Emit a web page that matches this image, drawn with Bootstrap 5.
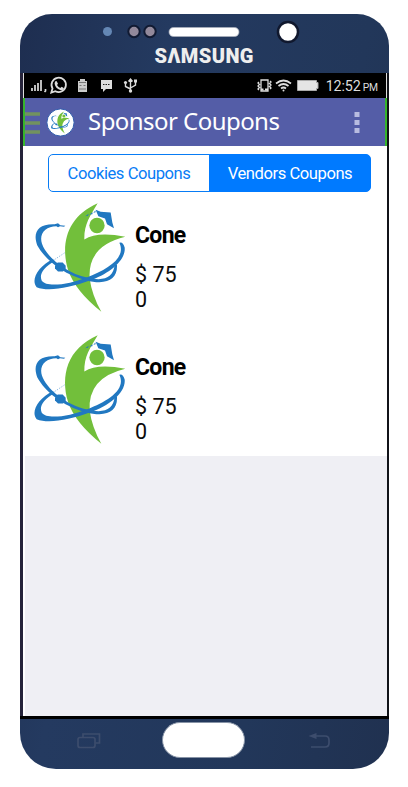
<!DOCTYPE html>
<html lang="en">
<head>
<meta charset="utf-8">
<meta name="viewport" content="width=device-width, initial-scale=1">
<title>Sponsor Coupons</title>
<link href="https://cdn.jsdelivr.net/npm/bootstrap@5.3.0/dist/css/bootstrap.min.css" rel="stylesheet">
<style>
body{background:#fff;overflow:hidden;font-family:Roboto,sans-serif;color:#0b0b0b}
.phone{width:369px;height:755px;margin:14px 0 0 20px;border-radius:32px 32px 36px 36px;background:linear-gradient(100deg,#1e2e50,#243a60 30%,#22375a 70%,#203150);overflow:hidden}
.bezel-top{height:59px}
.screen{width:369px;height:643px;border-left:3px solid #25233a;border-right:2px solid #111319}
.statusbar{height:25px;background:#000;border-left:1px solid #ddd;border-right:1px solid #ddd}
.appbar{height:48px;background:#545da7;border-left:2px solid #35b52c;border-right:2px solid #35b52c}
.app-title{font:24px/44px "Noto Sans","Open Sans",sans-serif;color:#fff;letter-spacing:-.55px;margin-left:13px;padding-bottom:3px;white-space:nowrap}
.clock{font-size:14.3px;line-height:27px;color:#ddd;letter-spacing:-.1px;white-space:nowrap}
.clock small{font-size:10.3px;margin-left:-1.5px}
.tabs{width:323px;height:38px;margin:8px 0 0 25px}
.tabs .btn{--bs-btn-color:#087cf5;--bs-btn-border-color:#087cf5;--bs-btn-active-bg:#007aff;--bs-btn-active-border-color:#007aff;--bs-btn-border-radius:5px;font-size:16.6px;line-height:37px;letter-spacing:-.45px;padding:0;white-space:nowrap}
.coupon{height:132px;padding:10px 0 0 11px}
.coupon h2{font-size:23px;line-height:26px;font-weight:700;letter-spacing:-.7px;margin:21px 0 13px;color:#000}
.price{font-size:21.5px;line-height:25px;width:46px}
.filler{background:#efeff4;margin-left:2px;height:260px}
.bezel-bottom{height:53px;border-top:3px solid #000}
svg{display:block;flex:none}
</style>
<script src="https://cdn.jsdelivr.net/npm/bootstrap@5.3.0/dist/js/bootstrap.bundle.min.js"></script>
</head>
<body>
<svg width="0" height="0" class="position-absolute">
<symbol id="logo" viewBox="42 21 279 330">
<path fill="#72bf3b" d="M233 23C210 62 192 86 193 132Q232 107 316 124Q202 151 209 250Q216 300 244 349Q165 286 144 223C121 145 141 63 233 23Z"/>
<circle cx="231" cy="90" r="23" fill="#72bf3b"/>
<g fill="#2178c1">
<path d="M227 43L242 49 272 51 277 81 282 98 261 86 255 69 235 62Z"/>
<path d="M196 62L206 55 204 61ZM208 57L218 50 217 56ZM220 51L227 45 226 51Z"/>
<path d="M136 91L132 94 120 92 114 95 109 92C77 92 56 114 66 145C78 182 137 233 201 246C253 259 280 246 284 208Q287 202 291 209C293 254 258 270 197 254C127 236 74 190 52 150C38 113 51 84 104 86L114 83 121 89Z"/>
<path d="M99 191L104 197C70 215 57 236 65 255C79 277 147 267 202 245C262 222 320 187 298 142Q308 137 314 156C318 194 269 235 207 256C149 277 84 289 50 275C31 252 55 211 99 191Z"/>
<path d="M113 201H128L137 211V219L129 228H114L105 219V211Z"/>
</g>
<path d="M104 192L137 170" stroke="#2178c1" stroke-width="1.5" stroke-dasharray="4 4"/>
</symbol>
</svg>
<main class="phone d-flex flex-column">
<header class="bezel-top">
<svg width="368" height="59" viewBox="20 14 368 59">
<circle cx="107.500" cy="31.500" r="4.500" fill="#6487b4"/>
<g fill="#92899b" stroke="#111a32" stroke-width="2"><circle cx="134" cy="31.500" r="5.700"/><circle cx="150" cy="31.500" r="5.700"/></g>
<rect x="169" y="27.500" width="70" height="9" rx="4.500" fill="#fff" stroke="#aab0bb" stroke-width=".7"/>
<circle cx="288" cy="32" r="10" fill="#fff" stroke="#10182e" stroke-width="2.500"/>
<text x="154.500" y="63" textLength="99" lengthAdjust="spacing" font-family="Roboto" font-weight="900" font-size="20" fill="#eee">S<tspan>Λ</tspan>MSUNG</text>
</svg>
</header>
<section class="screen">
<div class="statusbar d-flex">
<svg width="120" height="25" viewBox="24 73 120 25" fill="none" stroke="#ddd">
<path stroke-width="1.700" d="M32 91v-3M35 91v-6M38 91v-8M41 91v-11M45.500 89v2l-1 1"/>
<path stroke-width="1.800" d="M51.300 92.500l1.200-4a7.200 7.200 0 1 1 2.800 2.700Z"/>
<path fill="#ddd" stroke="none" d="M55 81.500l1.500-.6 1.500 2.800-1 1.400q1 2 3.200 3l1.500-1.300 2.300 1.500q-.6 2.300-3 2-5.500-1.500-6.400-6.500Z"/>
<path fill="#ccc" stroke="none" d="M80 79h5v2h2v11h-9V81h2Z"/>
<path stroke="#777" stroke-width="1" d="M79 82.500h7M79.500 85.500h2M83.500 85.500h2M79 89h7"/>
<path fill="#ddd" stroke="none" d="M101 80h11v9h-6l-3 3v-3h-2Z"/>
<path stroke="#222" stroke-dasharray="1.500 1" d="M103 84.500h7"/>
<path stroke-width="1.400" d="M130.500 91V79M128.500 81.500l2-2.500 2 2.500M125.500 83.500v3l5 2.500M135.500 82v3l-5 3"/>
<g fill="#ddd" stroke="none"><circle cx="125.500" cy="82.500" r="1.600"/><path d="M134 79.500h3v3h-3z"/><circle cx="130.500" cy="91" r="1.700"/></g>
</svg>
<svg class="ms-auto" width="66" height="25" viewBox="255 73 66 25" fill="none" stroke="#ddd">
<path stroke-width="1.300" d="M260 80h7v11h-7ZM258 82l-1 1 1.500 1.500-1.500 1.500 1.500 1.500L257 89l1 1M269 81l1 1-1.500 1.500 1.500 1.500-1.500 1.500 1.500 1.500-1 1"/>
<path stroke-width="2" d="M260 89.500h2.500M264 89.500h3"/>
<path stroke-width="1.700" d="M275 83.500q7.500-6 15 0M277.500 86q5-4 10 0M280 88.500q2.500-2 5 0"/>
<circle cx="282.500" cy="90.500" r="1" fill="#ddd" stroke="none"/>
<path stroke="#aaa" fill="#e5e5e5" d="M296.500 80.500h19v2h1.500v6h-1.500v2h-19Z"/>
</svg>
<div class="clock ms-1 me-2">12:52 <small>PM</small></div>
</div>
<nav class="appbar d-flex align-items-center">
<svg width="50" height="48" viewBox="25 98 50 48">
<path d="M25 114h15M25 123h15M25 132h15" stroke="#72925f" stroke-width="3.500"/>
<circle cx="60.500" cy="122.500" r="13.600" fill="#fff" stroke="#345fae" stroke-width="1"/>
<use href="#logo" x="51" y="111" width="19" height="23"/>
</svg>
<div class="app-title">Sponsor Coupons</div>
<svg class="ms-auto me-4" width="10" height="24" fill="#b8bce0"><path d="M3.500 2h5v5h-5zM3.500 10h5v5h-5zM3.500 18h5v5h-5z"/></svg>
</nav>
<div class="bg-white overflow-hidden" style="height:570px">
<div class="tabs btn-group d-flex" role="group">
<button type="button" class="btn btn-outline-primary w-50">Cookies Coupons</button>
<button type="button" class="btn btn-outline-primary active w-50">Vendors Coupons</button>
</div>
<article class="coupon d-flex"><svg width="93" height="111"><use href="#logo"/></svg><div class="ms-2"><h2>Cone</h2><div class="price">$ 75<br>0</div></div></article>
<article class="coupon d-flex"><svg width="93" height="111"><use href="#logo"/></svg><div class="ms-2"><h2>Cone</h2><div class="price">$ 75<br>0</div></div></article>
<div class="filler"></div>
</div>
</section>
<footer class="bezel-bottom">
<svg width="368" height="50" viewBox="20 720 368 50" fill="none" stroke="#3d4d6d" stroke-width="1.700">
<rect x="78" y="738.500" width="17" height="10" rx="2"/><path d="M83 738v-3h16.500v9h-4"/>
<rect x="162.500" y="723.500" width="82" height="35" rx="17.500" fill="#fff" stroke="#8793a6" stroke-width="1"/>
<path d="M312 737h13q4 0 4 4v3q0 4-4 4h-14"/><path d="M308.500 737l8-3v6Z" fill="#3d4d6d" stroke="none"/>
</svg>
</footer>
</main>
</body>
</html>
